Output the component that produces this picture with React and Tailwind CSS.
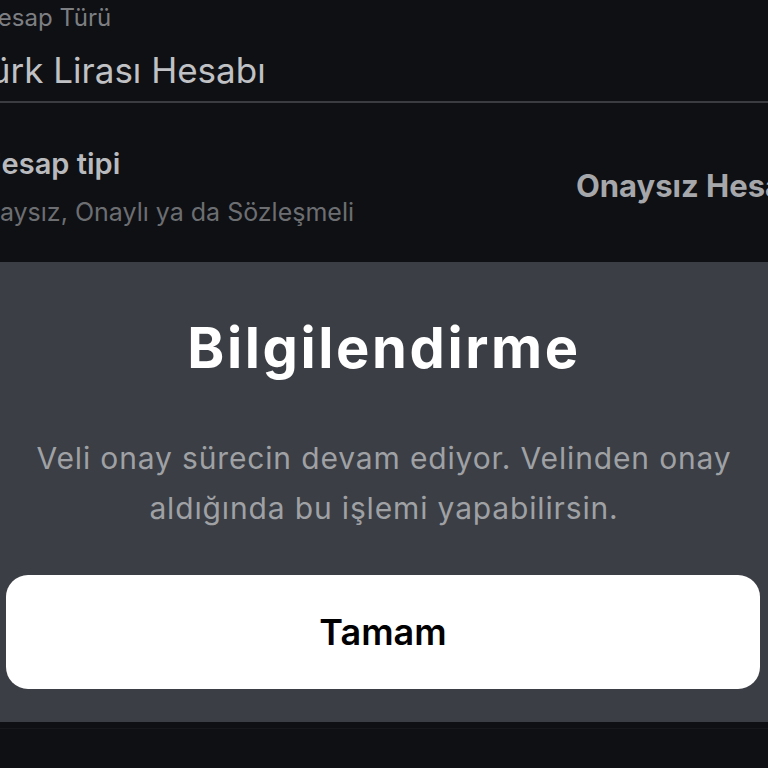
import React from 'react';

const font = { fontFamily: 'Inter, "Noto Sans", sans-serif' };

function AccountInfo() {
  return (
    <div className="h-[262px] overflow-hidden bg-[#0f1014]">
      <div className="-ml-[20px] -mr-[40px]">
        <div className="pt-[3px] text-[24px] leading-[30px] text-[#7d7f83]">Hesap Türü</div>
        <div className="mt-[16px] -ml-[11px] text-[35px] leading-[42px] text-[#c0c1c4]">Türk Lirası Hesabı</div>
        <div className="mt-[10px] h-[2px] bg-[#3a3c41]" />
        <div className="flex items-center justify-between pt-[43px]">
          <div>
            <div className="text-[29px] leading-[36px] font-semibold text-[#b9babd]">Hesap tipi</div>
            <div className="mt-[16px] -ml-[14px] text-[25px] leading-[28px] text-[#6c6e72]">Onaysız, Onaylı ya da Sözleşmeli</div>
          </div>
          <div className="-mr-[3px] text-[31px] font-bold text-[#a6a7aa]">Onaysız Hesabı</div>
        </div>
      </div>
    </div>
  );
}

function InfoModal() {
  return (
    <div className="bg-[#3b3e44] h-[460px] flex flex-col items-center">
      <h2 className="mt-[51px] text-[56px] leading-[70px] font-bold tracking-[2.6px] text-white">Bilgilendirme</h2>
      <p className="mt-[50px] px-4 text-center text-[30px] leading-[50px] tracking-[0.85px] text-[#9fa1a5]">
        Veli onay sürecin devam ediyor. Velinden onay aldığında bu işlemi yapabilirsin.
      </p>
      <button className="mt-[42px] ml-[6px] mr-[8px] self-stretch h-[114px] rounded-[22px] bg-white text-[36px] font-semibold text-black">
        Tamam
      </button>
    </div>
  );
}

export default function App() {
  return (
    <div className="w-[768px] h-[768px] overflow-hidden bg-[#0f1014]" style={font}>
      <AccountInfo />
      <InfoModal />
      <div className="mt-[6px] h-px bg-[#16181c]" />
    </div>
  );
}
